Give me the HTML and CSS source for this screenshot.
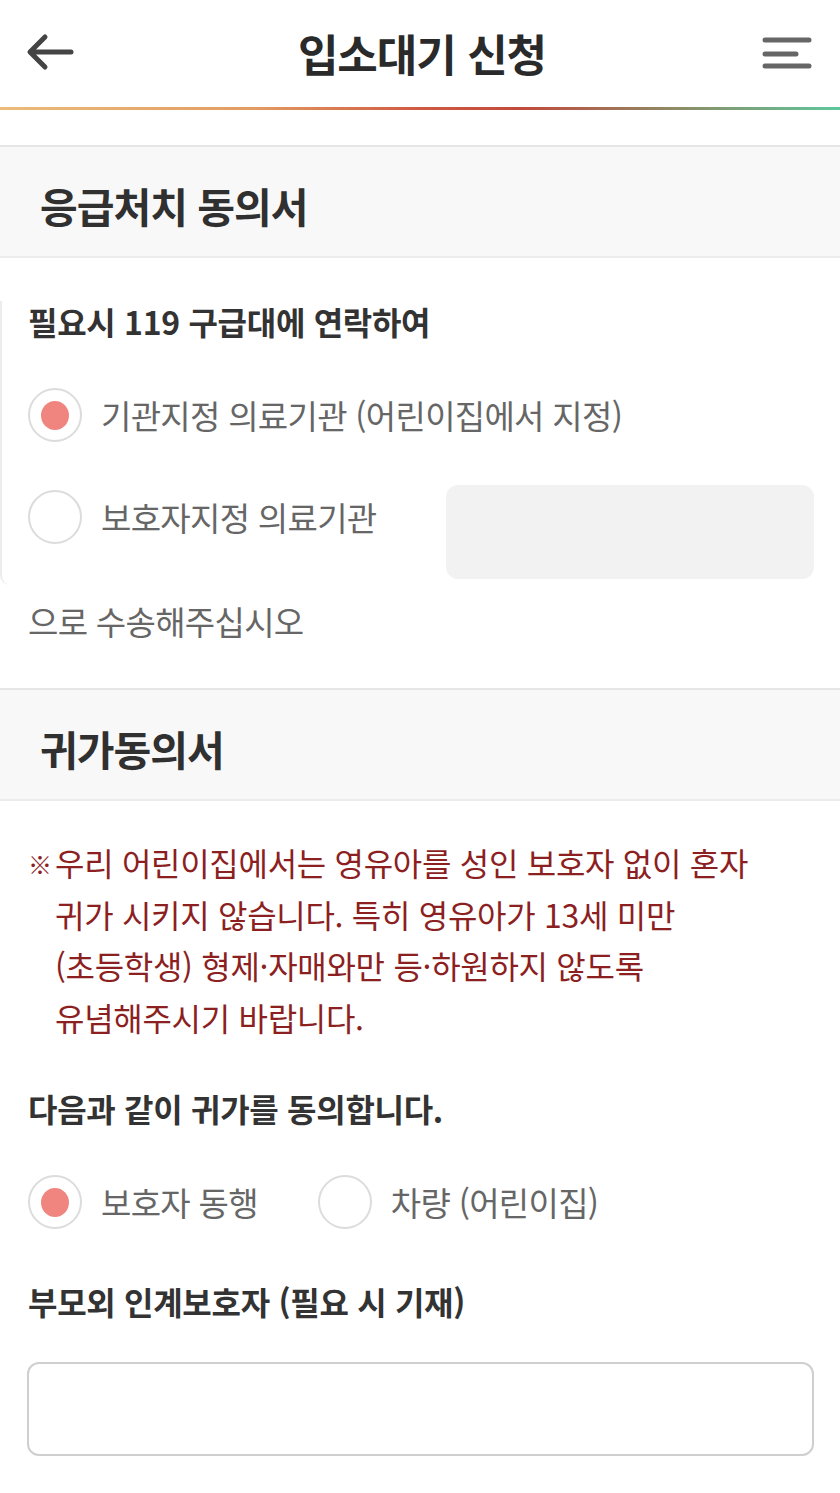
FILE: index.html
```html
<!DOCTYPE html>
<html lang="ko">
<head>
<meta charset="utf-8">
<title>입소대기 신청</title>
<link rel="stylesheet" href="styles.css">
</head>
<body>
<header class="topbar">
  <button class="icon-btn back" aria-label="뒤로">
    <svg width="50" height="40" viewBox="0 0 50 40"><path d="M45 20H5M19 5L4 20l15 15" fill="none" stroke="#444" stroke-width="5" stroke-linecap="round" stroke-linejoin="round"/></svg>
  </button>
  <h1 class="title">입소대기 신청</h1>
  <button class="icon-btn menu" aria-label="메뉴">
    <svg width="50" height="36" viewBox="0 0 50 36"><path d="M3 6H47M3 20H34M3 32H47" fill="none" stroke="#666" stroke-width="5" stroke-linecap="round"/></svg>
  </button>
</header>
<div class="accent-line"></div>

<main class="page">
  <section class="block first">
    <div class="section-head"><h2>응급처치 동의서</h2></div>
    <div class="card">
      <p class="question q-first">필요시 119 구급대에 연락하여</p>
      <div class="radio-row row-a">
        <span class="radio checked"></span>
        <span class="radio-label">기관지정 의료기관 (어린이집에서 지정)</span>
      </div>
      <div class="radio-row row-b">
        <span class="radio"></span>
        <span class="radio-label">보호자지정 의료기관</span>
        <div class="gray-field"></div>
      </div>
    </div>
    <p class="plain">으로 수송해주십시오</p>
  </section>

  <section class="block second">
    <div class="section-head"><h2>귀가동의서</h2></div>
    <div class="body">
      <p class="notice"><span class="mark">※</span>우리 어린이집에서는 영유아를 성인 보호자 없이 혼자<br>귀가 시키지 않습니다. 특히 영유아가 13세 미만<br>(초등학생) 형제·자매와만 등·하원하지 않도록<br>유념해주시기 바랍니다.</p>
      <p class="question q-agree">다음과 같이 귀가를 동의합니다.</p>
      <div class="radio-row inline">
        <div class="opt">
          <span class="radio checked"></span>
          <span class="radio-label">보호자 동행</span>
        </div>
        <div class="opt">
          <span class="radio"></span>
          <span class="radio-label">차량 (어린이집)</span>
        </div>
      </div>
      <p class="question q-guard">부모외 인계보호자 (필요 시 기재)</p>
      <div class="text-input"></div>
    </div>
  </section>
</main>
</body>
</html>
```

FILE: styles.css
```css
* { box-sizing: border-box; }
html, body { margin: 0; padding: 0; background: #fff; }
body {
  width: 840px;
  font-family: "Noto Sans CJK KR", "Noto Sans", sans-serif;
  color: #333;
}
p, h1, h2 { margin: 0; }

.topbar {
  height: 107px;
  display: flex;
  align-items: center;
  justify-content: space-between;
  padding: 0 28px 4px 26px;
}
.icon-btn {
  border: 0;
  background: none;
  padding: 0;
  display: flex;
}
.title {
  font-size: 44px;
  font-weight: 700;
  color: #2a2a2a;
  letter-spacing: -1px;
  line-height: 1;
  padding: 2px 0 0 6px;
}
.accent-line {
  height: 3px;
  background: linear-gradient(90deg, #ecbb7a 0%, #e39c62 30%, #cf5a42 50%, #c24a3c 62%, #8e8a64 80%, #5ec79c 100%);
}

.page { padding-top: 35px; }

.section-head {
  height: 113px;
  background: #f8f8f8;
  border-top: 2px solid #e6e6e6;
  border-bottom: 2px solid #ececec;
  display: flex;
  align-items: center;
  padding: 8px 0 0 40px;
}
.section-head h2 {
  font-size: 41px;
  font-weight: 700;
  color: #303030;
  letter-spacing: -1px;
  line-height: 1;
}

.card {
  border-left: 2px solid #ececec;
  border-bottom-left-radius: 10px;
  padding: 0 26px 6px 26px;
}
.question {
  font-size: 32px;
  font-weight: 700;
  color: #333;
  letter-spacing: -0.3px;
  line-height: 40px;
}
.q-first { margin-top: 43px; }

.radio-row {
  display: flex;
  align-items: center;
}
.row-a { margin-top: 44px; height: 60px; }
.row-b { margin-top: 40px; align-items: flex-start; }
.row-b .radio { margin-top: 5px; }
.row-b .radio-label { margin-top: 2px; }

.radio {
  width: 54px;
  height: 54px;
  border-radius: 50%;
  border: 2px solid #dcdcdc;
  background: #fff;
  display: flex;
  align-items: center;
  justify-content: center;
  flex: none;
}
.radio.checked::after {
  content: "";
  width: 28px;
  height: 29px;
  border-radius: 50%;
  background: #f08580;
}
.radio-label {
  margin-left: 19px;
  font-size: 33px;
  color: #666;
  letter-spacing: -0.7px;
  line-height: 60px;
}
.gray-field {
  margin-left: auto;
  width: 368px;
  height: 94px;
  background: #f2f2f2;
  border-radius: 12px;
}
.plain {
  margin: 16px 0 0 28px;
  font-size: 33px;
  color: #666;
  letter-spacing: -0.7px;
  line-height: 40px;
}

.second { margin-top: 47px; }
.body { padding: 0 26px 60px 28px; }
.notice {
  margin-top: 36px;
  padding-left: 27px;
  text-indent: -27px;
  font-size: 32px;
  line-height: 51.5px;
  color: #8c1f1f;
  letter-spacing: -0.3px;
}
.notice .mark {
  display: inline-block;
  text-indent: 0;
  width: 27px;
  font-size: 24px;
  font-weight: 700;
  letter-spacing: 0;
  line-height: 1;
  vertical-align: 2px;
}
.q-agree { margin-top: 45px; }
.inline { margin-top: 44px; height: 60px; }
.opt { display: flex; align-items: center; }
.opt + .opt { margin-left: 60px; }
.q-guard { margin-top: 49px; }
.text-input {
  margin-top: 41px;
  margin-left: -1px;
  height: 94px;
  border: 2px solid #cfcfcf;
  border-radius: 12px;
}
```
